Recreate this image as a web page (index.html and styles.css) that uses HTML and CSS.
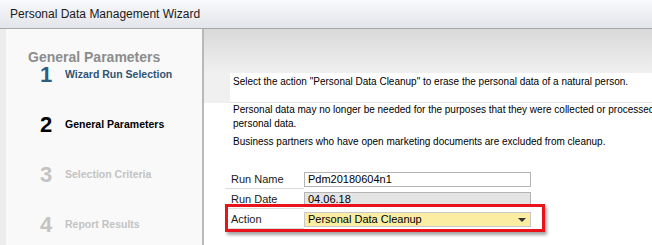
FILE: index.html
```html
<!DOCTYPE html>
<html lang="en">
<head>
  <meta charset="UTF-8" />
  <title>Personal Data Management Wizard</title>
  <link rel="stylesheet" href="styles.css">
</head>
<body>

  <div class="titlebar">Personal Data Management Wizard</div>

  <div class="main">
    <div class="strip"></div>

    <div class="sidebar">
      <div class="sidebar-title">General Parameters</div>
      <div class="steps">
        <div class="step done"><span class="num">1</span><span class="label">Wizard Run Selection</span></div>
        <div class="step current"><span class="num">2</span><span class="label">General Parameters</span></div>
        <div class="step todo"><span class="num">3</span><span class="label">Selection Criteria</span></div>
        <div class="step todo"><span class="num">4</span><span class="label">Report Results</span></div>
      </div>
    </div>

    <div class="content">
      <div class="content-head"></div>
      <div class="intro">Select the action "Personal Data Cleanup" to erase the personal data of a natural person.</div>
      <div class="body">
        <p>Personal data may no longer be needed for the purposes that they were collected or processed for. In this case, you can erase the<br>personal data.</p>
        <p>Business partners who have open marketing documents are excluded from cleanup.</p>

        <div class="form">
          <div class="row">
            <div class="field-label">Run Name</div>
            <div class="field">Pdm20180604n1</div>
          </div>
          <div class="row">
            <div class="field-label">Run Date</div>
            <div class="field readonly">04.06.18</div>
          </div>
          <div class="row">
            <div class="field-label">Action</div>
            <div class="field select">Personal Data Cleanup<span class="arrow"></span></div>
          </div>
          <div class="highlight"></div>
        </div>
      </div>
    </div>
  </div>

</body>
</html>
```

FILE: styles.css
```css
body {
  margin: 0;
  width: 652px;
  height: 245px;
  overflow: hidden;
  font-family: 'Liberation Sans', Arial, sans-serif;
  background: #ffffff;
}

.titlebar {
  height: 28px;
  line-height: 28px;
  padding-left: 10px;
  font-size: 12px;
  color: #1a1a1a;
  background: linear-gradient(#f8f9fc, #e3e5ea);
  border-bottom: 1px solid #a8a8a8;
}

.main {
  display: flex;
  height: 216px;
}

.strip {
  width: 6px;
  background: #ededed;
}

.sidebar {
  width: 196px;
  padding-top: 21px;
  background: #f9f9f9;
  border-right: 2px solid #b9b9b9;
}

.sidebar-title {
  padding-left: 22px;
  height: 14px;
  line-height: 14px;
  font-size: 14px;
  font-weight: bold;
  color: #8c8c8c;
}

.steps {
  display: flex;
  flex-direction: column;
  gap: 30px;
  padding-left: 34px;
  margin-top: 1px;
}

.step {
  display: flex;
  align-items: center;
  height: 20px;
}

.step .num {
  width: 25px;
  font-size: 22px;
  font-weight: bold;
  line-height: 18px;
}

.step .label {
  font-size: 10.5px;
  font-weight: bold;
  margin-top: -3px;
}

.step.done .num { color: #2b5e80; }
.step.done .label { color: #2f5474; }
.step.current .num,
.step.current .label { color: #000000; }
.step.todo .num,
.step.todo .label { color: #c3c3c3; }

.content {
  flex: 1;
  display: flex;
  flex-direction: column;
  background: #f0f0f0;
  min-width: 0;
  overflow: hidden;
}

.content-head {
  height: 44px;
  background: linear-gradient(#d9d9d9, #f0f0f0);
}

.intro {
  margin-left: 26px;
  height: 30px;
  padding: 3px 0 0 3px;
  box-sizing: border-box;
  background: #ffffff;
  font-size: 10px;
  color: #000000;
  white-space: nowrap;
  border-bottom: 1px solid #e4e4e4;
}

.body {
  flex: 1;
  background: #ffffff;
  padding: 0 0 0 29px;
  font-size: 10px;
  color: #000000;
  white-space: nowrap;
}

.body p {
  margin: 0 0 4px;
  line-height: 14px;
}

.form {
  position: relative;
  margin: 20px 0 0 -8px;
  width: 308px;
}

.row {
  display: flex;
  align-items: center;
  height: 20px;
}

.field-label {
  width: 73px;
  padding-left: 6px;
  height: 19px;
  line-height: 20px;
  border-bottom: 1px solid #dcdcdc;
  font-size: 11px;
  color: #1a1a1a;
}

.field {
  position: relative;
  width: 222px;
  height: 13px;
  line-height: 13px;
  padding-left: 3px;
  border: 1px solid #b4b4b4;
  background: #ffffff;
  font-size: 11px;
  color: #000000;
}

.field.readonly {
  background: #e4e4e4;
}

.field.select {
  background: #fbeda1;
  border-color: #c8c8c8;
}

.arrow {
  position: absolute;
  right: 4px;
  top: 5px;
  border-left: 4px solid transparent;
  border-right: 4px solid transparent;
  border-top: 4px solid #333333;
}

.highlight {
  position: absolute;
  left: 0;
  top: 35px;
  width: 314px;
  height: 22px;
  border: 3px solid #e8131b;
  box-shadow: 2px 3px 3px rgba(0, 0, 0, 0.35);
}
```
